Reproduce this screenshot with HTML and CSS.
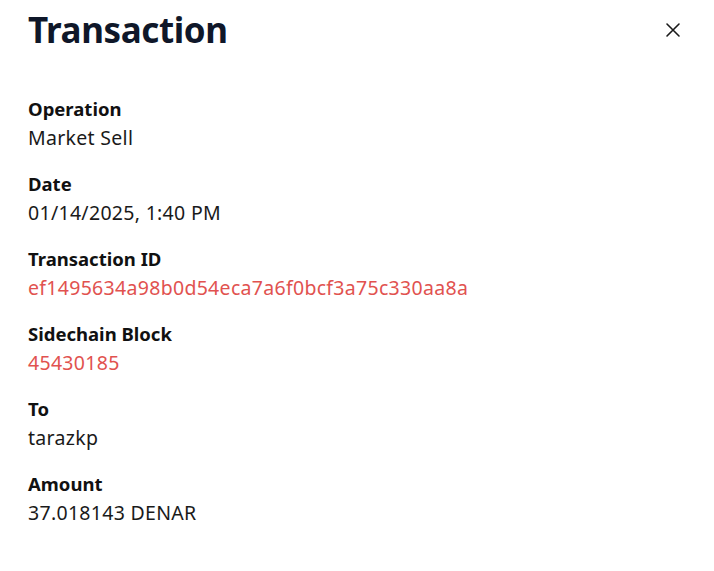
FILE: index.html
```html
<!DOCTYPE html>
<html>
<head>
<meta charset="utf-8">
<link rel="stylesheet" href="styles.css">
</head>
<body>
<div class="panel">
  <header class="head">
    <h1 class="title">Transaction</h1>
    <button class="close" aria-label="Close">
      <svg width="16" height="16" viewBox="0 0 16 16"><path d="M2 2L14 14M14 2L2 14" stroke="#1a1a1a" stroke-width="1.6" stroke-linecap="round"/></svg>
    </button>
  </header>
  <dl class="fields">
    <div class="field"><dt>Operation</dt><dd>Market Sell</dd></div>
    <div class="field"><dt>Date</dt><dd>01/14/2025, 1:40 PM</dd></div>
    <div class="field"><dt>Transaction ID</dt><dd class="link">ef1495634a98b0d54eca7a6f0bcf3a75c330aa8a</dd></div>
    <div class="field"><dt>Sidechain Block</dt><dd class="link">45430185</dd></div>
    <div class="field"><dt>To</dt><dd>tarazkp</dd></div>
    <div class="field"><dt>Amount</dt><dd>37.018143 DENAR</dd></div>
  </dl>
</div>
</body>
</html>
```
FILE: styles.css
```css
html, body {
  margin: 0;
  background: #ffffff;
}
body {
  font-family: "Noto Sans", "Open Sans", sans-serif;
  color: #111;
}
.panel {
  padding: 8px 24px 0 28px;
}
.head {
  display: flex;
  align-items: center;
  justify-content: space-between;
  height: 44px;
}
.title {
  margin: 0;
  font-size: 35px;
  font-weight: 700;
  color: #0f1729;
  line-height: 44px;
  letter-spacing: -0.4px;
}
.close {
  border: 0;
  background: transparent;
  padding: 0;
  width: 16px;
  height: 16px;
  margin-right: 9px;
  display: flex;
}
.fields {
  margin: 43px 0 0 0;
  display: flex;
  flex-direction: column;
  gap: 17px;
}
.field dt {
  font-weight: 700;
  font-size: 18.5px;
  line-height: 28px;
  color: #111;
}
.field dd {
  margin: 0;
  font-size: 19.5px;
  line-height: 30px;
  letter-spacing: 0.3px;
  color: #1a1a1a;
}
.field dd.link {
  color: #e1524f;
}
```
